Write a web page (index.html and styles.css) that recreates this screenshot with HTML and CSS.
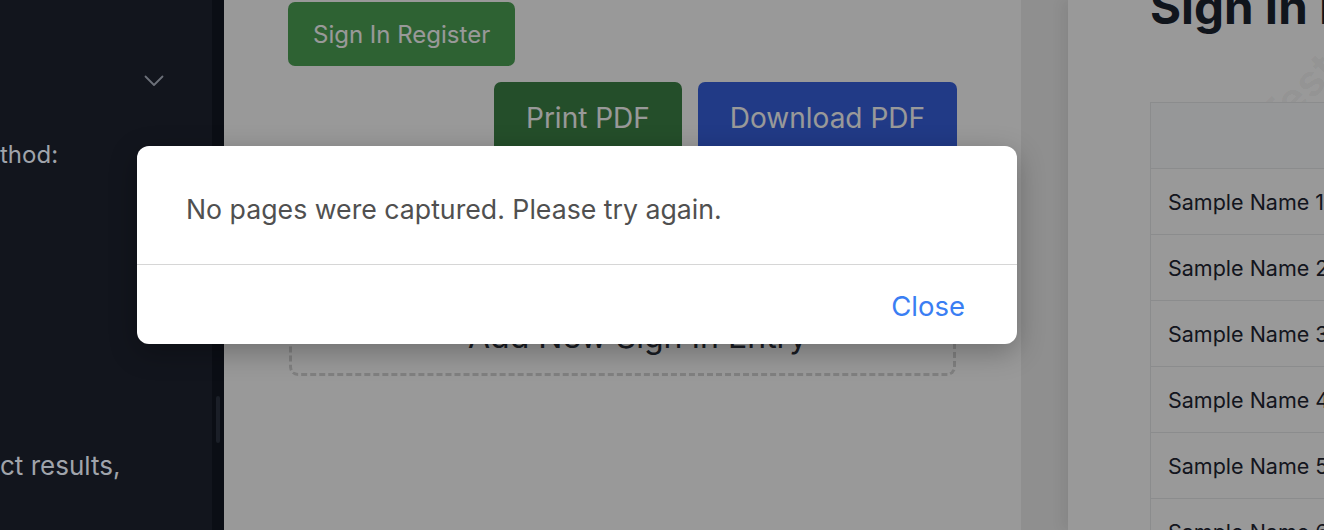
FILE: index.html
```html
<!DOCTYPE html>
<html lang="en">
<head>
<meta charset="utf-8">
<title>Sign In Register</title>
<link rel="stylesheet" href="styles.css">
</head>
<body>
<div class="app">
  <aside class="sidebar">
    <div class="side-scroll">
      <div class="select-row">
        <svg class="chevron" width="20" height="12" viewBox="0 0 20 12" aria-hidden="true">
          <path d="M1.5 1.5 L10 10 L18.5 1.5" fill="none" stroke="currentColor" stroke-width="1.8" stroke-linecap="round" stroke-linejoin="round"/>
        </svg>
      </div>
      <p class="side-label">thod:</p>
      <p class="side-text">ct results,</p>
    </div>
    <div class="side-track"><div class="side-thumb"></div></div>
  </aside>

  <main class="content">
    <section class="editor">
      <button class="btn btn-register">Sign In Register</button>
      <div class="actions">
        <button class="btn btn-print">Print PDF</button>
        <button class="btn btn-download">Download PDF</button>
      </div>
      <div class="add-entry">+ Add New Sign In Entry</div>
    </section>

    <div class="gutter"></div>

    <section class="preview">
      <h1 class="preview-title">Sign In Register</h1>
      <div class="watermark">Test Company</div>
      <table class="register">
        <thead>
          <tr><th></th><th>Name</th><th>Company</th><th>Time In</th></tr>
        </thead>
        <tbody>
          <tr><td>Sample Name 1</td><td></td><td></td><td></td></tr>
          <tr><td>Sample Name 2</td><td></td><td></td><td></td></tr>
          <tr><td>Sample Name 3</td><td></td><td></td><td></td></tr>
          <tr><td>Sample Name 4</td><td></td><td></td><td></td></tr>
          <tr><td>Sample Name 5</td><td></td><td></td><td></td></tr>
          <tr><td>Sample Name 6</td><td></td><td></td><td></td></tr>
        </tbody>
      </table>
    </section>

    <div class="backdrop"></div>
  </main>

  <div class="modal" role="alertdialog">
    <div class="modal-body">No pages were captured. Please try again.</div>
    <div class="modal-footer"><button class="modal-close">Close</button></div>
  </div>
</div>
</body>
</html>
```

FILE: styles.css
```css
* { box-sizing: border-box; }

html, body {
  margin: 0;
  padding: 0;
  width: 1324px;
  height: 530px;
  overflow: hidden;
  font-family: Inter, "Noto Sans", "Liberation Sans", sans-serif;
}

.app {
  display: flex;
  width: 1324px;
  height: 530px;
  position: relative;
}

/* ---------- Sidebar ---------- */
.sidebar {
  width: 224px;
  flex: none;
  display: flex;
  background: #12151d;
}

.side-scroll {
  width: 212px;
  display: flex;
  flex-direction: column;
  overflow: hidden;
}

.select-row {
  display: flex;
  justify-content: flex-end;
  padding: 75px 48px 0 0;
  height: 88px;
  color: #6c7079;
}

.chevron { display: block; }

.side-label,
.side-text {
  margin: 0;
  font-size: 24px;
  line-height: 30px;
  color: #a0a4ab;
  white-space: nowrap;
}

.side-label { margin-top: 52px; }
.side-text { margin-top: 281px; font-size: 26px; }

.side-track {
  width: 12px;
  background: #0b0e15;
  padding: 396px 0 0 4px;
}

.side-thumb {
  width: 4px;
  height: 47px;
  border-radius: 2px;
  background: #1b1f28;
}

/* ---------- Content ---------- */
.content {
  flex: 1;
  display: flex;
  position: relative;
  overflow: hidden;
  background: #ffffff;
}

.editor {
  width: 797px;
  flex: none;
  padding: 2px 64px 0;
  display: flex;
  flex-direction: column;
  align-items: flex-start;
}

.btn {
  border: none;
  border-radius: 7px;
  color: #ffffff;
  font-family: Inter, "Noto Sans", sans-serif;
  cursor: pointer;
}

.btn-register {
  height: 64px;
  padding: 0 25px;
  font-size: 24px;
  background: #4ea356;
}

.actions {
  align-self: stretch;
  display: flex;
  justify-content: flex-end;
  gap: 16px;
  margin-top: 16px;
}

.btn-print,
.btn-download {
  height: 72px;
  padding: 0 32px;
  font-size: 28px;
}

.btn-print { background: #3c8246; }
.btn-download { background: #3762e0; }

.add-entry {
  align-self: stretch;
  margin: 129px 1px 0;
  border: 3px dashed #d6d6d6;
  border-radius: 9px;
  padding: 30px 24px 15px;
  text-align: center;
  font-size: 32px;
  line-height: 42px;
  color: #2a2f3a;
}

.gutter {
  width: 47px;
  flex: none;
  background: #eeeeee;
}

.preview {
  flex: none;
  width: 800px;
  position: relative;
  padding-left: 82px;
  background: #ffffff;
  box-shadow: -6px 0 12px rgba(0, 0, 0, 0.06);
}

.preview-title {
  margin: -21px 0 67px;
  font-size: 47.5px;
  line-height: 56px;
  font-weight: 700;
  color: #1c2330;
  white-space: nowrap;
}

.watermark {
  position: absolute;
  left: 150px;
  top: -10px;
  transform: rotate(-45deg);
  font-size: 44px;
  font-weight: 700;
  color: rgba(0, 0, 0, 0.03);
  white-space: nowrap;
  pointer-events: none;
}

.register {
  border-collapse: collapse;
  width: 700px;
  position: relative;
}

.register th,
.register td {
  border: 1px solid #e8e9eb;
  height: 66px;
  padding: 0 17px;
  text-align: left;
  font-size: 21.5px;
  color: #1f2633;
  white-space: nowrap;
}

.register th {
  background: #fbfcfe;
  color: transparent;
}

.register th:first-child,
.register td:first-child { width: 200px; }

/* ---------- Backdrop & Modal ---------- */
.backdrop {
  position: absolute;
  inset: 0;
  background: rgba(0, 0, 0, 0.4);
}

.modal {
  position: absolute;
  left: 137px;
  top: 146px;
  width: 880px;
  background: #ffffff;
  border-radius: 12px;
  box-shadow: 0 8px 28px rgba(0, 0, 0, 0.28);
  z-index: 10;
}

.modal-body {
  padding: 46px 49px 38px;
  font-size: 26.7px;
  line-height: 34px;
  color: #505050;
  border-bottom: 1px solid #d6d6d6;
}

.modal-footer {
  height: 79px;
  display: flex;
  justify-content: flex-end;
  align-items: center;
  padding: 3px 52px 0 0;
}

.modal-close {
  border: none;
  background: none;
  padding: 0;
  font-family: Inter, "Noto Sans", sans-serif;
  font-size: 27.5px;
  color: #3a7ef3;
  cursor: pointer;
}
```
